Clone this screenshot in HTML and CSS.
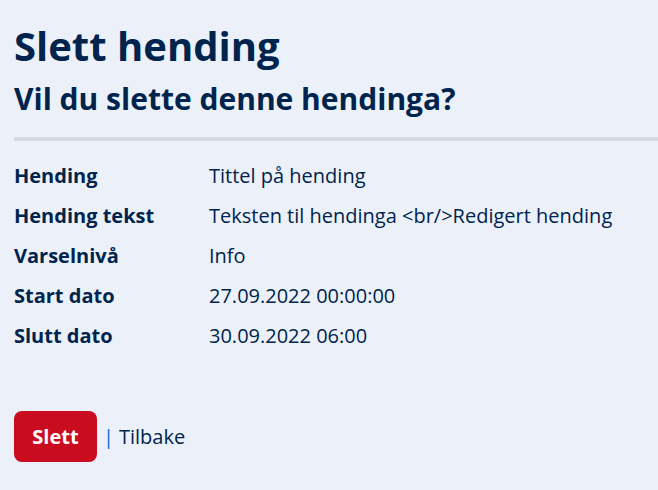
FILE: index.html
```html
<!DOCTYPE html>
<html lang="nn">
<head>
    <meta charset="UTF-8">
    <meta name="viewport" content="width=device-width, initial-scale=1.0">
    <title>Slett hending</title>
    <link rel="stylesheet" href="styles.css">
</head>
<body>

    <!-- Header -->
    <h1 class="page-title">Slett hending</h1>
    <h2 class="page-subtitle">Vil du slette denne hendinga?</h2>
    <hr class="divider">

    <!-- Details -->
    <dl class="details">
        <dt>Hending</dt>
        <dd>Tittel på hending</dd>
        <dt>Hending tekst</dt>
        <dd>Teksten til hendinga &lt;br/&gt;Redigert hending</dd>
        <dt>Varselnivå</dt>
        <dd>Info</dd>
        <dt>Start dato</dt>
        <dd>27.09.2022 00:00:00</dd>
        <dt>Slutt dato</dt>
        <dd>30.09.2022 06:00</dd>
    </dl>

    <!-- Actions -->
    <form class="actions">
        <button type="submit" class="btn-danger">Slett</button>
        <span class="sep">|</span>
        <a href="#" class="back-link">Tilbake</a>
    </form>

</body>
</html>
```

FILE: styles.css
```css
/* General Styles */
body {
    font-family: "Open Sans", Arial, sans-serif;
    background-color: #ecf1f9;
    color: #00244e;
    margin: 0;
    padding: 0 0 0 14px;
}

.page-title {
    font-size: 40px;
    font-weight: 700;
    line-height: 48px;
    margin: 22px 0 0 0;
}

.page-subtitle {
    font-size: 30px;
    font-weight: 700;
    line-height: 39px;
    margin: 9px 0 0 0;
}

.divider {
    border: none;
    height: 4px;
    background-color: #d5d8e0;
    margin: 19px 0 0 0;
}

/* Details list */
.details {
    display: grid;
    grid-template-columns: 195px 1fr;
    row-gap: 15px;
    margin: 22px 0 0 0;
    font-size: 20px;
    line-height: 25px;
}

.details dt {
    font-weight: 700;
}

.details dd {
    margin: 0;
}

/* Actions */
.actions {
    display: flex;
    align-items: center;
    margin-top: 63px;
    font-size: 20px;
}

.btn-danger {
    font-family: inherit;
    font-size: 20px;
    font-weight: 700;
    color: #fff;
    background-color: #c90c1f;
    border: none;
    border-radius: 8px;
    padding: 0 18px;
    width: 83px;
    height: 51px;
    cursor: pointer;
}

.sep {
    color: #0067c5;
    margin: 0 5px 0 6px;
}

.back-link {
    color: #00244e;
    text-decoration: none;
}
```
